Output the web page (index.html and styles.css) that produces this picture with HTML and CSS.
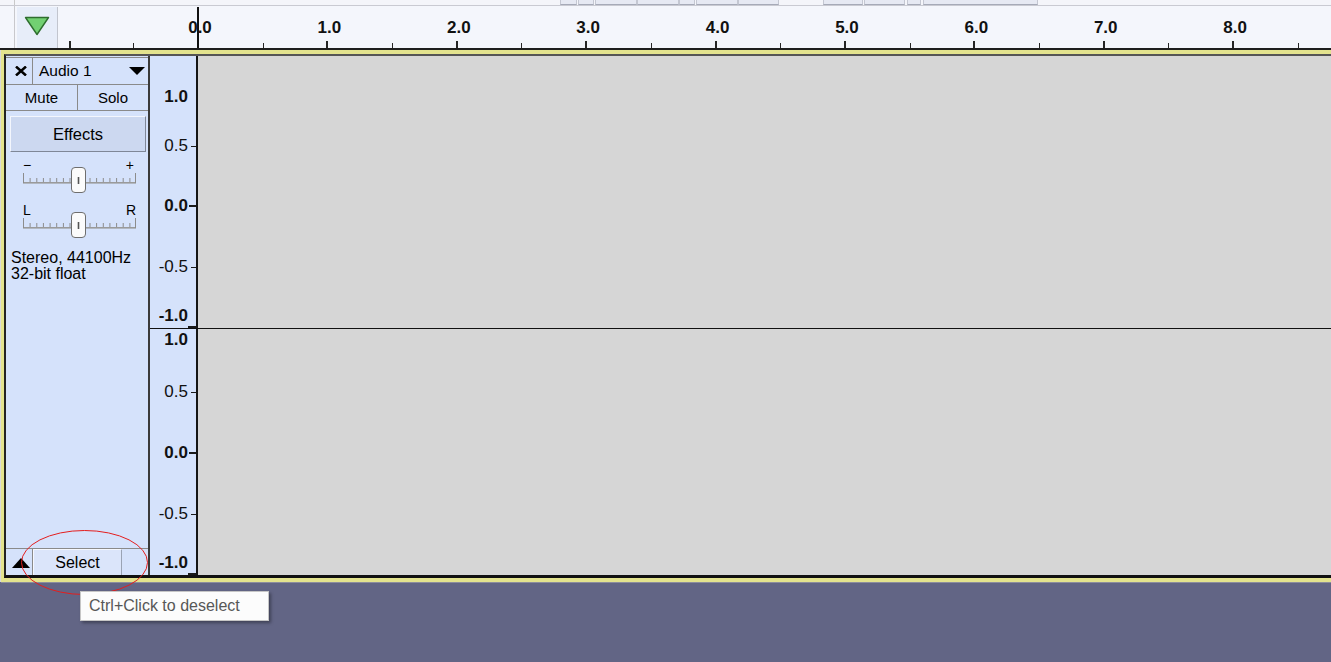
FILE: index.html
```html
<!DOCTYPE html>
<html lang="en">
<head>
<meta charset="utf-8">
<title>Audacity track</title>
<link rel="stylesheet" href="styles.css">
</head>
<body>
<div class="app">
  <div class="topstrip">
    <span class="ts-left"></span>
    <span class="tb tb1"></span><span class="tb tb2"></span><span class="tb tb3"></span><span class="tb tb4"></span><span class="tb tb5"></span><span class="tb tb6"></span><span class="tb tb7"></span><span class="tb tb8"></span><span class="tb tb9"></span><span class="tb tb10"></span><span class="tb tb11"></span>
  </div>

  <div class="ruler">
    <div class="ruler-gutter">
      <div class="gutter-line"></div>
      <div class="playbox">
        <svg width="26" height="20" viewBox="0 0 26 20"><polygon points="1.5,1.5 24.5,1.5 13,18.5" fill="#72d072" stroke="#2e6e2e" stroke-width="1.4" stroke-linejoin="round"/></svg>
      </div>
    </div>
    <div class="rcell pre"></div>
    <div class="rcell"><span>0.0</span></div>
    <div class="rcell"><span>1.0</span></div>
    <div class="rcell"><span>2.0</span></div>
    <div class="rcell"><span>3.0</span></div>
    <div class="rcell"><span>4.0</span></div>
    <div class="rcell"><span>5.0</span></div>
    <div class="rcell"><span>6.0</span></div>
    <div class="rcell"><span>7.0</span></div>
    <div class="rcell"><span>8.0</span></div>
    <div class="rcell"><span></span></div>
    <div class="playhead"></div>
  </div>

  <div class="frame">
    <div class="track">
      <div class="header">
        <div class="hrow1">
          <div class="close">
            <svg width="12" height="10" viewBox="0 0 12 10"><path d="M1 0.5 L11 9.5 M11 0.5 L1 9.5" stroke="#000" stroke-width="2.5"/></svg>
          </div>
          <div class="name">
            <span>Audio 1</span>
            <svg width="16" height="8" viewBox="0 0 16 8"><polygon points="0,0 16,0 8,8" fill="#000"/></svg>
          </div>
        </div>
        <div class="hrow2">
          <div class="mute">Mute</div>
          <div class="solo">Solo</div>
        </div>
        <div class="effects">Effects</div>

        <div class="slider gain">
          <svg width="142" height="40" viewBox="0 0 142 40">
            <rect x="17" y="26" width="113" height="1.6" fill="#9a9a9a"/>
            <path d="M17.5 17V27 M24.1 22V26 M30.8 22V26 M37.4 22V26 M44.1 22V26 M50.7 22V26 M57.4 22V26 M64 22V26 M70.7 22V26 M77.3 22V26 M84 22V26 M90.6 22V26 M97.3 22V26 M103.9 22V26 M110.6 22V26 M117.2 22V26 M123.9 22V26 M129.5 17V27" stroke="#8c8c8c" stroke-width="1"/>
            <rect x="65.5" y="11.5" width="14" height="25" rx="3.5" fill="#fbfbfb" stroke="#6e6e6e"/>
            <line x1="72.5" y1="21" x2="72.5" y2="28" stroke="#555" stroke-width="1.6"/>
          </svg>
          <div class="slabels"><span>−</span><span>+</span></div>
        </div>

        <div class="slider pan">
          <svg width="142" height="40" viewBox="0 0 142 40">
            <rect x="17" y="26" width="113" height="1.6" fill="#9a9a9a"/>
            <path d="M17.5 17V27 M24.1 22V26 M30.8 22V26 M37.4 22V26 M44.1 22V26 M50.7 22V26 M57.4 22V26 M64 22V26 M70.7 22V26 M77.3 22V26 M84 22V26 M90.6 22V26 M97.3 22V26 M103.9 22V26 M110.6 22V26 M117.2 22V26 M123.9 22V26 M129.5 17V27" stroke="#8c8c8c" stroke-width="1"/>
            <rect x="65.5" y="11.5" width="14" height="25" rx="3.5" fill="#fbfbfb" stroke="#6e6e6e"/>
            <line x1="72.5" y1="21" x2="72.5" y2="28" stroke="#555" stroke-width="1.6"/>
          </svg>
          <div class="slabels"><span>L</span><span>R</span></div>
        </div>

        <div class="info">Stereo, 44100Hz<br>32-bit float</div>

        <div class="hbottom">
          <div class="collapse">
            <svg width="18" height="10" viewBox="0 0 18 10"><polygon points="0,10 18,10 9,0" fill="#000"/></svg>
          </div>
          <div class="select">Select</div>
        </div>
      </div>

      <div class="channels">
        <div class="channel ch1">
          <div class="scale">
            <div class="lab major l1">1.0</div>
            <div class="lab minor l2">0.5</div>
            <div class="lab major l3">0.0</div>
            <div class="lab minor l4">-0.5</div>
            <div class="lab major l5 endtick">-1.0</div>
          </div>
          <div class="wave"></div>
        </div>
        <div class="channel ch2">
          <div class="scale">
            <div class="lab major l1">1.0</div>
            <div class="lab minor l2">0.5</div>
            <div class="lab major l3">0.0</div>
            <div class="lab minor l4">-0.5</div>
            <div class="lab major l5 endtick">-1.0</div>
          </div>
          <div class="wave"></div>
        </div>
      </div>
    </div>
  </div>

  <svg class="highlight" width="129" height="67" viewBox="0 0 129 67"><ellipse cx="64.5" cy="33.5" rx="63" ry="32" fill="none" stroke="#e41e1e" stroke-width="1"/></svg>
  <div class="tooltip">Ctrl+Click to deselect</div>
</div>
</body>
</html>
```

FILE: styles.css
```css
* { box-sizing: border-box; }

html, body {
  margin: 0;
  padding: 0;
}

body {
  background: #626585;
  width: 1331px;
  height: 662px;
  overflow: hidden;
  font-family: "Liberation Sans", Arial, sans-serif;
  color: #000;
}

.app {
  position: relative;
  width: 1331px;
  height: 662px;
  overflow: hidden;
}

/* ---------- top toolbar remnants ---------- */
.topstrip {
  display: flex;
  height: 6px;
  background: #f4f5fa;
  border-bottom: 1px solid #c9cad2;
}

.ts-left {
  width: 15px;
  border-right: 1px solid #c9c9c9;
  flex-shrink: 0;
}

.tb {
  flex-shrink: 0;
  height: 5px;
  background: #e6e9f3;
  border: 1px solid #c4c7d2;
  border-top: none;
  border-bottom-color: #a6aab8;
}

.tb1 { width: 17px; margin-left: 545px; }
.tb2 { width: 16px; margin-left: 1px; }
.tb3 { width: 42px; margin-left: 1px; }
.tb4 { width: 42px; }
.tb5 { width: 16px; }
.tb6 { width: 42px; margin-left: 1px; }
.tb7 { width: 41px; }
.tb8 { width: 40px; margin-left: 44px; }
.tb9 { width: 41px; margin-left: 1px; }
.tb10 { width: 14px; margin-left: 2px; }
.tb11 { width: 115px; margin-left: 2px; }

/* ---------- timeline ruler ---------- */
.ruler {
  position: relative;
  display: flex;
  height: 44px;
  background: #f4f6fc;
  border-bottom: 2px solid #1e1e1e;
  overflow: hidden;
}

.ruler-gutter {
  display: flex;
  width: 58px;
  flex-shrink: 0;
}

.gutter-line {
  width: 15px;
  border-right: 1px solid #c8c8cc;
}

.playbox {
  margin: 1px 0 0 2px;
  width: 41px;
  height: 41px;
  background: #e7edf9;
  border-right: 1px solid #c2c5ce;
  display: flex;
  align-items: flex-start;
  justify-content: center;
  padding-top: 9px;
}

.rcell {
  flex-shrink: 0;
  width: 129.4px;
  height: 42px;
  text-align: center;
  padding-top: 12px;
  padding-left: 4px;
  font-size: 17px;
  line-height: 20px;
  font-weight: bold;
  color: #111;
  background:
    linear-gradient(#262626, #262626) left bottom / 1px 5px no-repeat,
    linear-gradient(#262626, #262626) center bottom / 2px 7px no-repeat;
}

.rcell.pre {
  width: 75.3px;
  background: linear-gradient(#262626, #262626) 11px bottom / 2px 7px no-repeat;
}

.playhead {
  position: absolute;
  left: 197px;
  top: 1px;
  bottom: 0;
  width: 2px;
  background: #111;
}

/* ---------- track frame ---------- */
.frame {
  margin-left: 1px;
  border-top: 4px solid #e3e38e;
  border-left: 3px solid #e3e38e;
  border-bottom: 4px solid #e3e38e;
  box-shadow: 0 1px 0 #8b8d9e, -1px 0 0 #d9d9d9;
}

.track {
  display: flex;
  height: 524px;
  border-top: 2px solid #555;
  border-left: 2px solid #222;
  border-bottom: 3px solid #111;
}

/* ---------- track control panel ---------- */
.header {
  width: 144px;
  flex-shrink: 0;
  background: #d5e2fb;
  border-right: 2px solid #3a3a3a;
  display: flex;
  flex-direction: column;
  padding-top: 1px;
}

.hrow1 {
  display: flex;
  height: 28px;
  border-top: 1px solid #8a8a8a;
  border-bottom: 1px solid #8a8a8a;
}

.close {
  width: 27px;
  border-right: 1px solid #8a8a8a;
  display: flex;
  align-items: center;
  padding-left: 9px;
}

.name {
  flex: 1;
  display: flex;
  align-items: center;
  justify-content: space-between;
  padding: 0 3px 0 6px;
  font-size: 15.5px;
}

.hrow2 {
  display: flex;
  height: 26px;
  border-bottom: 1px solid #8a8a8a;
  font-size: 15px;
}

.mute, .solo {
  display: flex;
  align-items: center;
  justify-content: center;
}

.mute {
  width: 72px;
  border-right: 1px solid #8a8a8a;
}

.solo {
  flex: 1;
}

.effects {
  margin: 5px 2px 0 4px;
  height: 36px;
  background: #ccd8f0;
  border: 1px solid;
  border-color: #f3f6fd #7f8797 #7f8797 #f3f6fd;
  display: flex;
  align-items: center;
  justify-content: center;
  font-size: 16.5px;
}

.slider {
  display: grid;
  height: 40px;
}

.slider > * {
  grid-area: 1 / 1;
}

.slider svg {
  display: block;
}

.gain { margin-top: 4px; }
.pan { margin-top: 5px; }

.slabels {
  display: flex;
  justify-content: space-between;
  align-items: flex-start;
  padding: 2px 14px 0 17px;
  font-size: 14px;
  line-height: 14px;
}

.pan .slabels {
  padding-right: 12px;
}

.info {
  margin-top: 9px;
  padding-left: 5px;
  font-size: 16px;
  line-height: 16px;
}

.hbottom {
  margin-top: auto;
  display: flex;
  height: 27px;
  border-top: 1px solid #8a8a8a;
}

.collapse {
  width: 27px;
  border-right: 1px solid #8a8a8a;
  display: flex;
  align-items: flex-end;
  padding: 0 0 7px 6px;
}

.select {
  width: 89px;
  background: #dbe5fa;
  border: 1px solid;
  border-color: #f5f8ff #9aa3b4 #9aa3b4 #f5f8ff;
  border-bottom: none;
  display: flex;
  align-items: center;
  justify-content: center;
  font-size: 16px;
}

/* ---------- channels ---------- */
.channels {
  flex: 1;
  display: flex;
  flex-direction: column;
}

.channel {
  display: flex;
}

.ch1 {
  height: 273px;
  border-bottom: 1px solid #111;
}

.ch2 {
  flex: 1;
}

.scale {
  width: 48px;
  flex-shrink: 0;
  background: #d5e2fb;
  border-right: 2px solid #151515;
  display: flex;
  flex-direction: column;
}

.lab {
  height: 18px;
  line-height: 18px;
  font-size: 17px;
  text-align: right;
  padding-right: 8px;
  color: #111;
}

.lab.major {
  font-weight: bold;
  background: linear-gradient(#1a1a1a, #1a1a1a) right center / 7px 2px no-repeat;
}

.lab.minor {
  background: linear-gradient(#1a1a1a, #1a1a1a) right center / 5px 1px no-repeat;
}

.lab.l1 { background: none; }

.lab.endtick {
  height: 21px;
  padding-bottom: 3px;
  background: linear-gradient(#1a1a1a, #1a1a1a) right bottom / 8px 2px no-repeat;
}

.ch1 .l1 { margin-top: 32px; }
.ch1 .l2 { margin-top: 31px; }
.ch1 .l3 { margin-top: 42px; }
.ch1 .l4 { margin-top: 43px; }
.ch1 .l5 { margin-top: 31px; }

.ch2 .l1 { margin-top: 2px; }
.ch2 .l2 { margin-top: 34px; }
.ch2 .l3 { margin-top: 43px; }
.ch2 .l4 { margin-top: 43px; }
.ch2 .l5 { margin-top: 31px; }

.wave {
  flex: 1;
  background: #d6d6d6;
}

/* ---------- overlays ---------- */
.highlight {
  position: absolute;
  left: 20px;
  top: 529px;
}

.tooltip {
  position: absolute;
  left: 80px;
  top: 591px;
  width: 189px;
  height: 30px;
  background: #fcfcfc;
  border: 1px solid #c6c6c6;
  box-shadow: 2px 2px 3px rgba(0, 0, 0, 0.35);
  padding-left: 8px;
  font-size: 16px;
  line-height: 28px;
  color: #575757;
  white-space: nowrap;
}
```
